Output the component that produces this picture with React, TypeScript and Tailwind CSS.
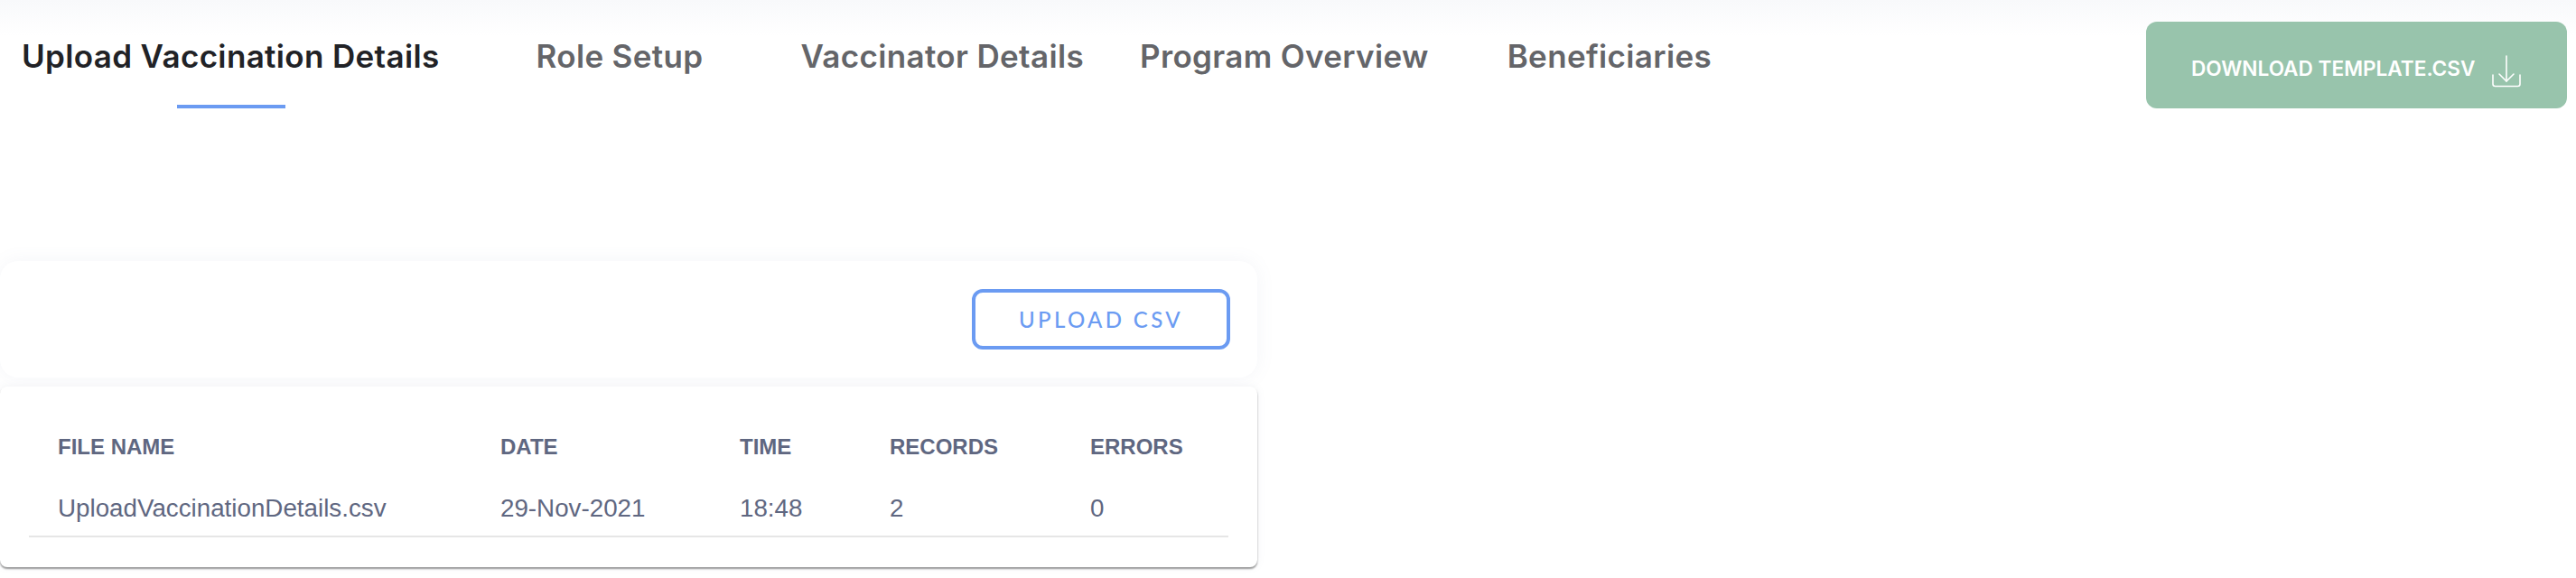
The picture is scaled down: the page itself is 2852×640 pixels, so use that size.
import React from 'react';

const tabs = [
  { label: 'Role Setup', className: 'ml-[107px]' },
  { label: 'Vaccinator Details', className: 'ml-[108px]' },
  { label: 'Program Overview', className: 'ml-[62px]' },
  { label: 'Beneficiaries', className: 'ml-[87px]' },
];

const columns = ['FILE NAME', 'DATE', 'TIME', 'RECORDS', 'ERRORS'];
const row = ['UploadVaccinationDetails.csv', '29-Nov-2021', '18:48', '2', '0'];

const DownloadIcon = () => (
  <svg className="mt-[6px] ml-[18px] h-[36px] w-[34px]" viewBox="0 0 34 36" fill="none" stroke="currentColor" strokeWidth="1.6" strokeLinecap="round" strokeLinejoin="round">
    <path d="M17 1v28" />
    <path d="M9 21l8 8 8-8" />
    <path d="M2 22v10a2.5 2.5 0 0 0 2.5 2.5h25A2.5 2.5 0 0 0 32 32V22" />
  </svg>
);

const App: React.FC = () => {
  return (
    <div className="h-[640px] w-[2852px] overflow-hidden bg-white bg-gradient-to-b from-[#f8f9fb] to-white to-[40px] font-['Liberation_Sans',sans-serif]">
      <header className="flex items-start justify-between pt-6 pr-[10px] pl-6">
        <nav className="flex pt-[16px] font-['Inter',sans-serif] text-[35px] leading-[44px] font-semibold tracking-[0.35px] text-[#646569]">
          <div className="relative text-[#212226]">
            Upload Vaccination Details
            <span className="absolute top-[76px] left-[172px] h-1 w-[120px] bg-[#6b9bf2]" />
          </div>
          {tabs.map((tab) => (
            <div key={tab.label} className={tab.className}>
              {tab.label}
            </div>
          ))}
        </nav>
        <button className="flex h-24 w-[466px] items-center rounded-xl bg-[#98c4ac] pt-2 pl-[50px] font-['Inter',sans-serif] text-[22.6px] font-semibold text-white">
          DOWNLOAD TEMPLATE.CSV
          <DownloadIcon />
        </button>
      </header>

      <main className="mt-[169px] w-[1392px]">
        <section className="flex h-[129px] items-center justify-end rounded-[20px] bg-white pr-[30px] shadow-[0_0_20px_rgba(120,130,160,0.08)]">
          <button className="h-[67px] w-[286px] rounded-xl border-4 border-[#6b9bf2] font-['Lato',sans-serif] text-[24px] font-medium tracking-[0.14em] text-[#6b9bf2]">
            UPLOAD CSV
          </button>
        </section>

        <section className="mt-[10px] h-[200px] rounded-lg bg-white pt-[53px] pr-8 pl-8 shadow-[0_2px_2px_rgba(0,0,0,0.4),0_0_8px_rgba(120,130,160,0.1)]">
          <div className="border-b-2 border-[#e6e6e6] pb-[14px] pl-[32px] text-[#5f6781]">
            <div className="grid grid-cols-[490px_265px_166px_222px_1fr] text-2xl leading-[28px] font-bold">
              {columns.map((col) => (
                <div key={col}>{col}</div>
              ))}
            </div>
            <div className="mt-[38px] grid grid-cols-[490px_265px_166px_222px_1fr] text-[27.75px] leading-[32px]">
              {row.map((cell) => (
                <div key={cell}>{cell}</div>
              ))}
            </div>
          </div>
        </section>
      </main>
    </div>
  );
};

export default App;
